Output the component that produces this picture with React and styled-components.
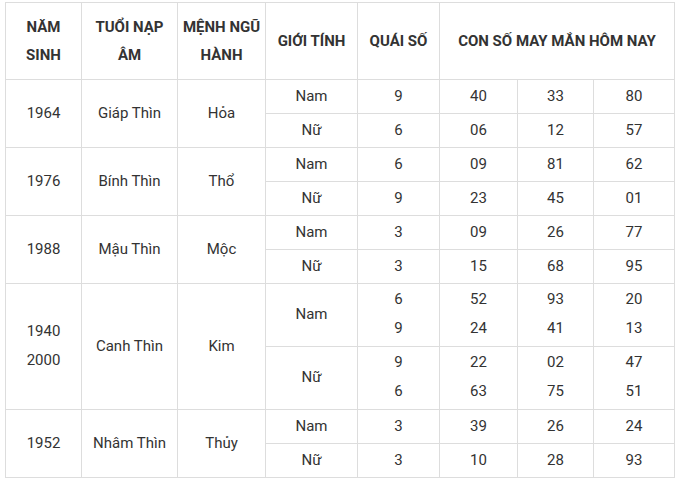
import React from "react";
import styled, { createGlobalStyle } from "styled-components";

const GlobalStyle = createGlobalStyle`
  html, body {
    margin: 0;
    padding: 0;
    background: #fff;
  }
  body {
    font-family: Roboto, "Liberation Sans", Arial, sans-serif;
  }
`;

const Page = styled.div`
  padding: 2px 0 0 5px;
`;

const Table = styled.table`
  border-collapse: collapse;
  table-layout: fixed;
  width: 669px;
  color: #333;
  font-size: 15px;
`;

const HeadCell = styled.th`
  border: 1px solid #ddd;
  height: 75px;
  padding: 0 4px 1px;
  font-weight: 700;
  line-height: 28px;
  text-align: center;
  vertical-align: middle;
  color: #333;
`;

const Cell = styled.td`
  border: 1px solid #ddd;
  height: ${(p) => (p.$tall ? 60 : 31)}px;
  padding: 0 4px 2px;
  line-height: ${(p) => (p.$stack ? "29px" : "22px")};
  text-align: center;
  vertical-align: middle;
`;

const Line = styled.div`
  display: block;
`;

const widths = [76, 96, 88, 92, 82, 78, 76, 81];

const data = [
  {
    year: ["1964"], tuoi: "Giáp Thìn", menh: "Hỏa",
    rows: [
      { g: "Nam", q: ["9"], n: [["40"], ["33"], ["80"]] },
      { g: "Nữ", q: ["6"], n: [["06"], ["12"], ["57"]] },
    ],
  },
  {
    year: ["1976"], tuoi: "Bính Thìn", menh: "Thổ",
    rows: [
      { g: "Nam", q: ["6"], n: [["09"], ["81"], ["62"]] },
      { g: "Nữ", q: ["9"], n: [["23"], ["45"], ["01"]] },
    ],
  },
  {
    year: ["1988"], tuoi: "Mậu Thìn", menh: "Mộc",
    rows: [
      { g: "Nam", q: ["3"], n: [["09"], ["26"], ["77"]] },
      { g: "Nữ", q: ["3"], n: [["15"], ["68"], ["95"]] },
    ],
  },
  {
    year: ["1940", "2000"], tuoi: "Canh Thìn", menh: "Kim",
    rows: [
      { g: "Nam", q: ["6", "9"], n: [["52", "24"], ["93", "41"], ["20", "13"]] },
      { g: "Nữ", q: ["9", "6"], n: [["22", "63"], ["02", "75"], ["47", "51"]] },
    ],
  },
  {
    year: ["1952"], tuoi: "Nhâm Thìn", menh: "Thủy",
    rows: [
      { g: "Nam", q: ["3"], n: [["39"], ["26"], ["24"]] },
      { g: "Nữ", q: ["3"], n: [["10"], ["28"], ["93"]] },
    ],
  },
];

function Stack({ items }) {
  return items.map((t, i) => <Line key={i}>{t}</Line>);
}

export default function App() {
  return (
    <Page>
      <GlobalStyle />
      <Table>
        <colgroup>
          {widths.map((w, i) => (
            <col key={i} style={{ width: w }} />
          ))}
        </colgroup>
        <thead>
          <tr>
            <HeadCell>NĂM<br />SINH</HeadCell>
            <HeadCell>TUỔI NẠP<br />ÂM</HeadCell>
            <HeadCell>MỆNH NGŨ<br />HÀNH</HeadCell>
            <HeadCell>GIỚI TÍNH</HeadCell>
            <HeadCell>QUÁI SỐ</HeadCell>
            <HeadCell colSpan={3}>CON SỐ MAY MẮN HÔM NAY</HeadCell>
          </tr>
        </thead>
        <tbody>
          {data.map((grp) => {
            const tall = grp.year.length > 1;
            return grp.rows.map((r, i) => (
              <tr key={grp.tuoi + i}>
                {i === 0 && (
                  <>
                    <Cell rowSpan={2} $stack={tall}>
                      <Stack items={grp.year} />
                    </Cell>
                    <Cell rowSpan={2}>{grp.tuoi}</Cell>
                    <Cell rowSpan={2}>{grp.menh}</Cell>
                  </>
                )}
                <Cell $tall={tall}>{r.g}</Cell>
                <Cell $tall={tall} $stack={tall}>
                  <Stack items={r.q} />
                </Cell>
                {r.n.map((col, k) => (
                  <Cell key={k} $tall={tall} $stack={tall}>
                    <Stack items={col} />
                  </Cell>
                ))}
              </tr>
            ));
          })}
        </tbody>
      </Table>
    </Page>
  );
}
